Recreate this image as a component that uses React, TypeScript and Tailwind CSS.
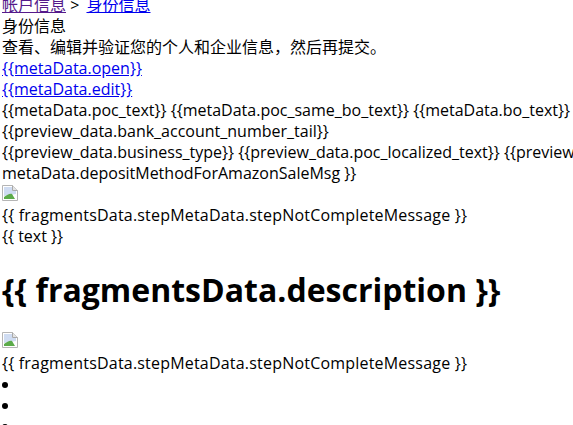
// Raw, unstyled template page: plain text lines and two broken images
function BrokenImage() {
  return (
    <svg width="16" height="16" viewBox="0 0 16 16" className="mt-[1px] block">
      <path d="M0.5 0.5H10.5L15.5 5.5V15.5H0.5Z" fill="#ffffff" stroke="#b5b5b5" />
      <path d="M10.5 0.5V5.5H15.5" fill="#e4e4e4" stroke="#a9a9a9" />
      <path d="M2 2H10V6H14V9L2 11Z" fill="#cfdcf2" />
      <path d="M2 14V12C5 10 8 8 10 9L13 14Z" fill="#5cab4a" />
    </svg>
  )
}

function Line({ children }: { children: React.ReactNode }) {
  return <div className="h-[21px] leading-[21px] whitespace-nowrap">{children}</div>
}

export default function App() {
  return (
    <div className="h-[425px] w-[573px] overflow-hidden bg-white font-['Open_Sans','Noto_Sans_CJK_SC',sans-serif] text-[16px] text-black">
      <div className="-mt-[5px] pl-[2px]">
        <Line>
          <a href="#a" className="text-[#551a8b] underline">帐户信息</a> &gt;{' '}
          <a href="#b" className="ml-[3px] text-[#0000ee] underline">身份信息</a>
        </Line>
        <Line>身份信息</Line>
        <Line>查看、编辑并验证您的个人和企业信息，然后再提交。</Line>
        <Line>
          <a href="#c" className="text-[#0000ee] underline">{'{{metaData.open}}'}</a>
        </Line>
        <Line>
          <a href="#d" className="text-[#0000ee] underline">{'{{metaData.edit}}'}</a>
        </Line>
        <Line>{'{{metaData.poc_text}} {{metaData.poc_same_bo_text}} {{metaData.bo_text}}'}</Line>
        <Line>{'{{preview_data.bank_account_number_tail}}'}</Line>
        <Line>{'{{preview_data.business_type}} {{preview_data.poc_localized_text}} {{preview_data.seller}}'}</Line>
        <Line>{'metaData.depositMethodForAmazonSaleMsg }}'}</Line>
        <div className="h-[20px]"><BrokenImage /></div>
        <Line><span className="tracking-[0.2px]">{'{{ fragmentsData.stepMetaData.stepNotCompleteMessage }}'}</span></Line>
        <Line>{'{{ text }}'}</Line>
        <h1 className="my-[21px] text-[32px] leading-[43px] font-bold whitespace-nowrap">
          {'{{ fragmentsData.description }}'}
        </h1>
        <div className="h-[21px]"><BrokenImage /></div>
        <Line><span className="tracking-[0.2px]">{'{{ fragmentsData.stepMetaData.stepNotCompleteMessage }}'}</span></Line>
        <ul>
          <li className="h-[21px] pt-[8px]"><span className="block size-[6px] rounded-full bg-black" /></li>
          <li className="h-[21px] pt-[8px]"><span className="block size-[6px] rounded-full bg-black" /></li>
          <li className="h-[21px] pt-[8px]"><span className="block size-[6px] rounded-full bg-black" /></li>
        </ul>
      </div>
    </div>
  )
}
